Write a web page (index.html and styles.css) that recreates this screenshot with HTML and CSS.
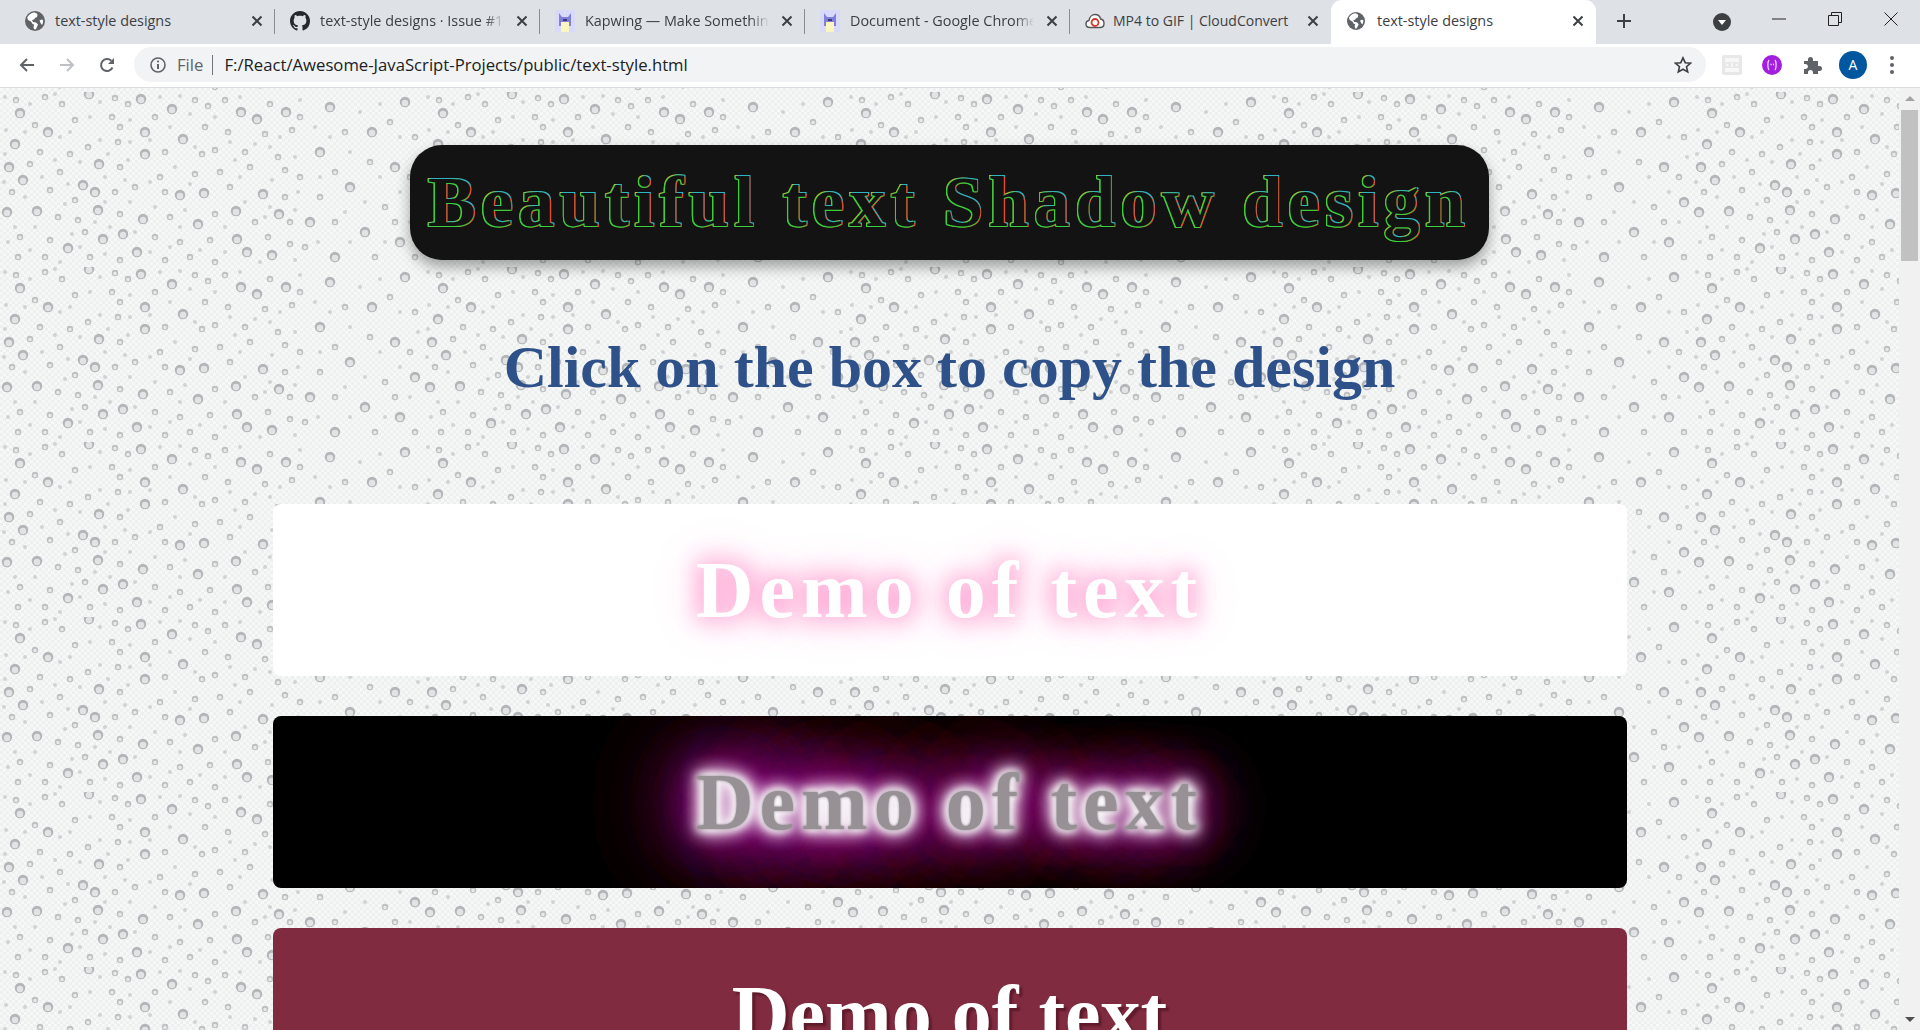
FILE: index.html
```html
<!DOCTYPE html>
<html>
<head>
  <meta http-equiv="Content-Type" content="text/html; charset=utf-8" />
  <title>text-style designs</title>
  <link rel="stylesheet" href="styles.css">
</head>
<body>

<svg class="defs" width="0" height="0">
  <symbol id="globe" viewBox="0 0 20 20">
    <circle cx="10" cy="10" r="10" fill="#5f6368"/>
    <path d="M9 1.500C6 2 3.500 3.800 2.200 6.500L3 9l3 1.500 1.500 2.500 1.500.5-.5 3 1 2c1 0 1.500-.5 2-1.500l1.500-3.500-2-2-3-.5-1-2 2-.5 1-1.500 2-1 .5-2.500C11.500 2 10 1.500 9 1.500zM16.500 8.500l-2 1 1 2.500 1.500 2c1-1.500 1.300-3.500 1-5z" fill="#fff"/>
  </symbol>
  <symbol id="octocat" viewBox="0 0 16 16">
    <path fill="#24292e" fill-rule="evenodd" d="M8 0C3.580 0 0 3.580 0 8c0 3.540 2.290 6.530 5.470 7.590.4.070.55-.17.55-.38 0-.19-.01-.82-.01-1.490-2.010.37-2.530-.49-2.690-.94-.09-.23-.48-.94-.82-1.130-.28-.15-.68-.52-.01-.53.63-.01 1.080.58 1.230.82.720 1.210 1.870.87 2.330.66.070-.52.280-.87.510-1.070-1.780-.2-3.640-.89-3.640-3.950 0-.87.310-1.590.820-2.150-.08-.2-.36-1.020.08-2.120 0 0 .67-.21 2.200.82.640-.18 1.320-.27 2-.27s1.360.09 2 .27c1.530-1.040 2.200-.82 2.200-.82.440 1.100.16 1.920.08 2.120.51.560.82 1.270.82 2.150 0 3.070-1.870 3.750-3.650 3.950.29.250.54.730.54 1.480 0 1.070-.01 1.930-.01 2.200 0 .21.150.46.550.38A8.010 8.010 0 0 0 16 8c0-4.420-3.580-8-8-8z"/>
  </symbol>
  <symbol id="kapwing" viewBox="0 0 20 22" preserveAspectRatio="none">
    <rect width="20" height="22" fill="#d9d9f9"/>
    <path d="M4 3l3 4h6l3-4v13H4z" fill="#8080d8"/>
    <rect x="6" y="12" width="8" height="10" fill="#fbf5c0"/>
    <rect x="8" y="9" width="4" height="2" fill="#3c3c78"/>
  </symbol>
  <symbol id="cloud" viewBox="0 0 20 16">
    <path d="M5 14.500C2.500 14.500 1 13 1 11c0-2 1.500-3.300 3-3.500C4.500 4 7 1.500 10 1.500c3 0 5 2 5.600 4.500 2 .3 3.400 2.300 3.400 4.500 0 2.300-1.700 4-4 4z" fill="#fff" stroke="#555" stroke-width="1.400"/>
    <circle cx="10" cy="9.500" r="3.500" fill="#fff" stroke="#d9342b" stroke-width="1.800"/>
  </symbol>
  <symbol id="close" viewBox="0 0 12 12">
    <path d="M1.500 1.500l9 9M10.500 1.500l-9 9" stroke="#3c4043" stroke-width="2" fill="none"/>
  </symbol>
</svg>

<div class="tabstrip">
  <div class="tab">
    <svg class="favicon"><use href="#globe"/></svg>
    <span class="tab-title">text-style designs</span>
    <svg class="tab-close"><use href="#close"/></svg>
  </div>
  <div class="tab">
    <svg class="favicon"><use href="#octocat"/></svg>
    <span class="tab-title fade">text-style designs · Issue #14</span>
    <svg class="tab-close"><use href="#close"/></svg>
  </div>
  <div class="tab">
    <svg class="favicon tall"><use href="#kapwing"/></svg>
    <span class="tab-title fade">Kapwing — Make Something</span>
    <svg class="tab-close"><use href="#close"/></svg>
  </div>
  <div class="tab">
    <svg class="favicon tall"><use href="#kapwing"/></svg>
    <span class="tab-title fade">Document - Google Chrome</span>
    <svg class="tab-close"><use href="#close"/></svg>
  </div>
  <div class="tab tab-last">
    <svg class="favicon"><use href="#cloud"/></svg>
    <span class="tab-title">MP4 to GIF | CloudConvert</span>
    <svg class="tab-close"><use href="#close"/></svg>
  </div>
  <div class="tab tab-active">
    <svg class="favicon"><use href="#globe"/></svg>
    <span class="tab-title">text-style designs</span>
    <svg class="tab-close"><use href="#close"/></svg>
  </div>
  <svg class="new-tab" viewBox="0 0 16 16"><path d="M8 1v14M1 8h14" stroke="#3c4043" stroke-width="2"/></svg>
  <svg class="tab-search" viewBox="0 0 18 18"><circle cx="9" cy="9" r="9" fill="#3c4043"/><path d="M5 7h8l-4 5z" fill="#fff"/></svg>
  <div class="win-buttons">
    <svg viewBox="0 0 14 14"><path d="M0 7h14" stroke="#222" stroke-width="1"/></svg>
    <svg viewBox="0 0 14 14"><path d="M.5 3.500h10v10H.5zM3.500 3.500V.5h10v10h-3" stroke="#222" fill="none"/></svg>
    <svg viewBox="0 0 14 14"><path d="M.5.5l13 13M13.500.5l-13 13" stroke="#222" fill="none"/></svg>
  </div>
</div>

<div class="toolbar">
  <svg class="tool-icon" viewBox="0 0 16 16"><path d="M15 8H2M8 2L2 8l6 6" stroke="#5f6368" stroke-width="2" fill="none"/></svg>
  <svg class="tool-icon" viewBox="0 0 16 16"><path d="M1 8h13M8 2l6 6-6 6" stroke="#bdc1c6" stroke-width="2" fill="none"/></svg>
  <svg class="tool-icon" viewBox="0 0 16 16"><path d="M13.500 10.500A6 6 0 1 1 12.300 3.800" stroke="#5f6368" stroke-width="2" fill="none"/><path d="M15 1v6H9z" fill="#5f6368"/></svg>
  <div class="omnibox">
    <svg class="info-icon" viewBox="0 0 16 16"><circle cx="8" cy="8" r="7" stroke="#5f6368" stroke-width="1.600" fill="none"/><path d="M8 7v5" stroke="#5f6368" stroke-width="2"/><circle cx="8" cy="4.500" r="1.100" fill="#5f6368"/></svg>
    <span class="scheme">File</span>
    <span class="url">F:/React/Awesome-JavaScript-Projects/public/text-style.html</span>
    <svg class="star" viewBox="0 0 18 18"><path d="M9 1.800l2.200 4.900 5.300.5-4 3.500 1.200 5.200L9 13.200l-4.700 2.700 1.200-5.200-4-3.500 5.300-.5z" stroke="#3c4043" stroke-width="1.600" fill="none"/></svg>
  </div>
  <div class="ext-icons">
    <svg class="ext" viewBox="0 0 20 20"><rect width="20" height="20" rx="2" fill="#e8e8e8"/><path d="M3 3h14v4H3zM3 13h14v4H3zM4 8l3 2-3 2zM16 8l-3 2 3 2zM9 8h2v4H9z" fill="#f7f7f7"/></svg>
    <svg class="ext" viewBox="0 0 20 20"><circle cx="10" cy="10" r="10" fill="#a31fe0"/><path d="M7 5C5.500 7 5.500 13 7 15M13 5c1.500 2 1.500 8 0 10" stroke="#f0d0ff" stroke-width="1.300" fill="none"/><path d="M8.500 9.500h1M11 9.500h1" stroke="#fff" stroke-width="1.500"/></svg>
    <svg class="ext" viewBox="0 0 20 20"><path d="M2 6h4V4.500a2.500 2.500 0 0 1 5 0V6h5v5h1.500a2.500 2.500 0 0 1 0 5H16v3H11v-1.500a2.500 2.500 0 0 0-5 0V19H2v-5h1.500a2.500 2.500 0 0 0 0-5H2z" fill="#5f6368"/></svg>
    <span class="avatar">A</span>
    <svg class="menu-dots" viewBox="0 0 4 18"><circle cx="2" cy="2" r="2" fill="#5f6368"/><circle cx="2" cy="9" r="2" fill="#5f6368"/><circle cx="2" cy="16" r="2" fill="#5f6368"/></svg>
  </div>
</div>

<div class="viewport">
  <div class="page">
    <h1 class="title">Beautiful text Shadow design</h1>
    <h2 class="subtitle">Click on the box to copy the design</h2>
    <div class="demo demo-pink">Demo of text</div>
    <div class="demo demo-neon">Demo of text</div>
    <div class="demo demo-wine">Demo of text</div>
  </div>
  <div class="scrollbar">
    <span class="arrow-up"></span>
    <span class="thumb"></span>
    <span class="arrow-down"></span>
  </div>
</div>

</body>
</html>
```

FILE: styles.css
```css
html, body {
  margin: 0;
  height: 1030px;
  overflow: hidden;
}
body {
  display: flex;
  flex-direction: column;
  font-family: "Open Sans", "Noto Sans", sans-serif;
  background-color: #fff;
}
.defs {
  display: none;
}

/* tabs */
.tabstrip {
  height: 44px;
  padding-left: 10px;
  background-color: #dee1e6;
  display: flex;
  align-items: center;
}
.tab {
  width: 265px;
  height: 44px;
  box-sizing: border-box;
  padding: 0 12px 3px 15px;
  display: flex;
  align-items: center;
  position: relative;
  color: #3c4043;
  font-size: 14.400px;
}
.tab::after {
  content: "";
  position: absolute;
  right: 0;
  top: 9px;
  height: 25px;
  width: 1px;
  background-color: #8a8d91;
}
.tab-last {
  width: 261px;
  font-size: 14px;
}
.tab-last .favicon {
  margin-right: 8px;
}
.tab-last::after, .tab-active::after {
  display: none;
}
.tab-active {
  width: 265px;
  height: 44px;
  padding-left: 16px;
  background-color: #fff;
  border-radius: 11px 11px 0 0;
}
.favicon {
  width: 20px;
  height: 20px;
  margin-right: 10px;
  flex: none;
}
.favicon.tall {
  height: 22px;
}
.tab-active .favicon {
  width: 18px;
  height: 18px;
  margin-right: 12px;
}
.tab-title {
  flex: 1;
  overflow: hidden;
  white-space: nowrap;
}
.fade {
  -webkit-mask-image: linear-gradient(to right, #000 88%, transparent 98%);
  mask-image: linear-gradient(to right, #000 88%, transparent 98%);
}
.tab-close {
  width: 12px;
  height: 12px;
  margin-left: 8px;
  flex: none;
}
.new-tab {
  width: 16px;
  height: 16px;
  margin-left: 20px;
  margin-bottom: 3px;
  flex: none;
}
.tab-search {
  width: 18px;
  height: 18px;
  margin-left: 81px;
  flex: none;
}
.win-buttons {
  display: flex;
  gap: 42px;
  margin-left: 41px;
  margin-top: -6px;
}
.win-buttons svg {
  width: 14px;
  height: 14px;
}

/* address bar */
.toolbar {
  height: 41px;
  padding: 0 0 2px 19px;
  background-color: #fff;
  border-bottom: 1px solid #dadce0;
  display: flex;
  align-items: center;
}
.tool-icon {
  width: 16px;
  height: 16px;
  margin-right: 24px;
  flex: none;
}
.omnibox {
  width: 1572px;
  height: 35px;
  margin-left: -5px;
  box-sizing: border-box;
  padding: 0 14px 0 16px;
  background-color: #f1f3f4;
  border-radius: 18px;
  display: flex;
  align-items: center;
  font-size: 16.700px;
}
.info-icon {
  width: 16px;
  height: 16px;
  flex: none;
}
.scheme {
  margin-left: 11px;
  padding-right: 9px;
  border-right: 1px solid #70757a;
  color: #5f6368;
  line-height: 20px;
}
.url {
  flex: 1;
  margin-left: 11px;
  color: #202124;
}
.star {
  width: 18px;
  height: 18px;
  flex: none;
}
.ext-icons {
  display: flex;
  align-items: center;
  margin-left: 16px;
}
.ext {
  width: 20px;
  height: 20px;
  margin-right: 20px;
  flex: none;
}
.avatar {
  width: 28px;
  height: 28px;
  margin-left: -3px;
  border-radius: 50%;
  background-color: #00569f;
  color: #fff;
  font-size: 14px;
  line-height: 28px;
  text-align: center;
}
.menu-dots {
  width: 4px;
  height: 18px;
  margin-left: 23px;
}

/* page */
.viewport {
  flex: 1;
  min-height: 0;
  display: flex;
}
.page {
  flex: 1;
  min-width: 0;
  overflow: hidden;
  padding-top: 57px;
  font-family: "Liberation Serif", "Times New Roman", serif;
  background-color: #f2f3f3;
  background-image:
    url("data:image/svg+xml,<svg xmlns='http://www.w3.org/2000/svg' width='423' height='175'><defs><filter id='b'><feGaussianBlur stdDeviation='.6'/></filter><path id='l' stroke-linecap='round' fill='none' d='M89 2h0M141 7h0M172 17h0M241 20h0M257 27h0M286 20h0M20 21h0M145 40h0M183 47h0M48 40h0M15 52h0M145 62h0M99 72h0M9 75h0M23 88h0M83 93h0M180 103h0M204 101h0M263 102h0M95 100h0M98 118h0M37 119h0M7 120h0M143 127h0M198 132h0M236 119h0M279 122h0M123 142h0M237 147h0M103 147h0M68 156h0M137 160h0M247 160h0M272 163h0M330 15h0M372 40h0M405 10h0M320 60h0M395 75h0M350 95h0M415 110h0M310 130h0M365 140h0M400 150h0M335 165h0'/><path id='m' stroke-linecap='round' fill='none' d='M16 8h0M45 5h0M115 6h0M128 12h0M62 12h0M195 8h0M208 14h0M225 8h0M270 12h0M35 33h0M75 28h0M112 25h0M120 35h0M155 25h0M205 35h0M228 40h0M265 42h0M292 38h0M40 60h0M70 62h0M88 55h0M118 50h0M165 60h0M202 62h0M215 58h0M245 60h0M278 65h0M30 72h0M60 80h0M120 75h0M160 85h0M195 82h0M220 80h0M250 75h0M285 78h0M12 100h0M50 98h0M75 108h0M115 100h0M135 95h0M165 100h0M230 95h0M285 105h0M58 125h0M78 128h0M120 122h0M170 125h0M215 122h0M255 130h0M290 130h0M20 145h0M50 148h0M85 140h0M155 145h0M180 150h0M210 148h0M268 145h0M290 152h0M18 165h0M45 165h0M90 165h0M120 168h0M165 168h0M190 165h0M215 170h0M300 25h0M345 40h0M390 30h0M415 45h0M300 85h0M335 80h0M370 70h0M410 85h0M320 105h0M385 115h0M335 130h0M395 130h0M305 155h0M375 165h0M415 165h0'/><path id='s' stroke-linecap='round' fill='none' d='M5 5h0M30 12h0M55 2h0M100 10h0M160 5h0M180 4h0M240 5h0M300 8h0M6 38h0M25 40h0M60 45h0M90 25h0M130 28h0M170 35h0M190 22h0M215 25h0M280 45h0M70 40h0M100 48h0M130 50h0M150 48h0M195 55h0M230 50h0M255 52h0M270 55h0M5 62h0M55 68h0M80 70h0M108 62h0M128 68h0M175 75h0M235 68h0M295 65h0M4 90h0M42 85h0M68 92h0M105 85h0M125 88h0M150 90h0M190 92h0M240 85h0M272 88h0M25 105h0M65 112h0M105 110h0M130 110h0M155 115h0M185 118h0M245 110h0M270 115h0M298 100h0M15 135h0M35 135h0M72 142h0M95 130h0M110 135h0M135 140h0M180 135h0M225 135h0M265 125h0M295 118h0M8 150h0M30 158h0M60 170h0M80 155h0M105 162h0M150 160h0M170 155h0M200 158h0M225 160h0M260 170h0M295 168h0M315 35h0M330 45h0M360 20h0M380 12h0M400 45h0M350 60h0M380 85h0M418 65h0M320 85h0M365 110h0M400 100h0M345 120h0M318 150h0M350 150h0M385 150h0M410 130h0'/></defs><g filter='url(%23b)'><use href='%23l' stroke='%23b3b6b8' stroke-width='10.5'/><use href='%23l' y='1' stroke='%23e2e3e4' stroke-width='6.5'/><use href='%23m' stroke='%23bec0c2' stroke-width='6.5'/><use href='%23m' y='.5' stroke='%23e8e9ea' stroke-width='3.5'/><use href='%23s' stroke='%23d0d2d4' stroke-width='4'/></g></svg>"),
    repeating-conic-gradient(#eeefef 0 25%, #f6f7f7 0 50%);
  background-size: 423px 175px, 6px 6px;
  background-position: 0 4px, 0 0;
}
.title {
  width: fit-content;
  margin: 0 auto;
  padding: 16px 19px 16px 18px;
  background-color: #131313;
  border-radius: 32px;
  box-shadow: 0 7px 14px rgba(0, 0, 0, 0.35);
  color: #131313;
  font-size: 72px;
  font-weight: 700;
  line-height: 83px;
  letter-spacing: 5.300px;
  white-space: nowrap;
  text-shadow: -1.200px 1.200px 0 #3ccf3c, -1.200px 0 0 #3ccf3c, 0 1.200px 0 #3ccf3c, 1.200px 1.200px 0 #e04a30, 1.200px -1.200px 0 #2fb4c0, -1.200px -1.200px 0 #b8bc38;
}
.subtitle {
  margin: 73px 0 102px;
  color: #2f5189;
  font-size: 60px;
  font-weight: 700;
  line-height: 69px;
  text-align: center;
}
.demo {
  width: 1354px;
  height: 172px;
  box-sizing: border-box;
  margin: 0 auto 40px;
  padding: 40px 0;
  border-radius: 8px;
  overflow: hidden;
  font-size: 80px;
  font-weight: 700;
  line-height: 92px;
  text-align: center;
  white-space: nowrap;
}
.demo-pink {
  background-color: #fff;
  color: #fff;
  letter-spacing: 6px;
  text-shadow: 0 0 25px #ffa6d4, 0 0 25px #ffa6d4, 0 0 50px #ffb4da;
}
.demo-neon {
  background-color: #000;
  color: #979195;
  letter-spacing: 6px;
  text-shadow: 0 0 3px #8a8a8a,
    0 0 10px #fff, 0 0 10px #fff, 0 0 20px #fff, 0 0 20px #fff, 0 0 20px #fff,
    0 0 40px #a81098, 0 0 40px #a81098,
    0 0 70px #900880, 0 0 70px #900880, 0 0 70px #900880,
    0 0 110px #800078, 0 0 110px #800078, 0 0 110px #800078, 0 0 110px #800078,
    0 0 170px #800078, 0 0 170px #800078, 0 0 170px #800078, 0 0 170px #800078, 0 0 170px #800078;
}
.demo-wine {
  background-color: #802b3f;
  color: #fff;
  text-shadow: 3px 3px 2px #5e1a2b;
}

/* scrollbar */
.scrollbar {
  width: 21px;
  flex: none;
  background-color: #f1f1f1;
  display: flex;
  flex-direction: column;
  align-items: center;
  position: relative;
}
.arrow-up {
  margin-top: 8px;
  border-left: 5px solid transparent;
  border-right: 5px solid transparent;
  border-bottom: 5px solid #a3a3a3;
}
.thumb {
  width: 17px;
  height: 151px;
  margin-top: 9px;
  background-color: #c1c1c1;
}
.arrow-down {
  margin-top: auto;
  margin-bottom: 8px;
  border-left: 5px solid transparent;
  border-right: 5px solid transparent;
  border-top: 5px solid #505050;
}
```
